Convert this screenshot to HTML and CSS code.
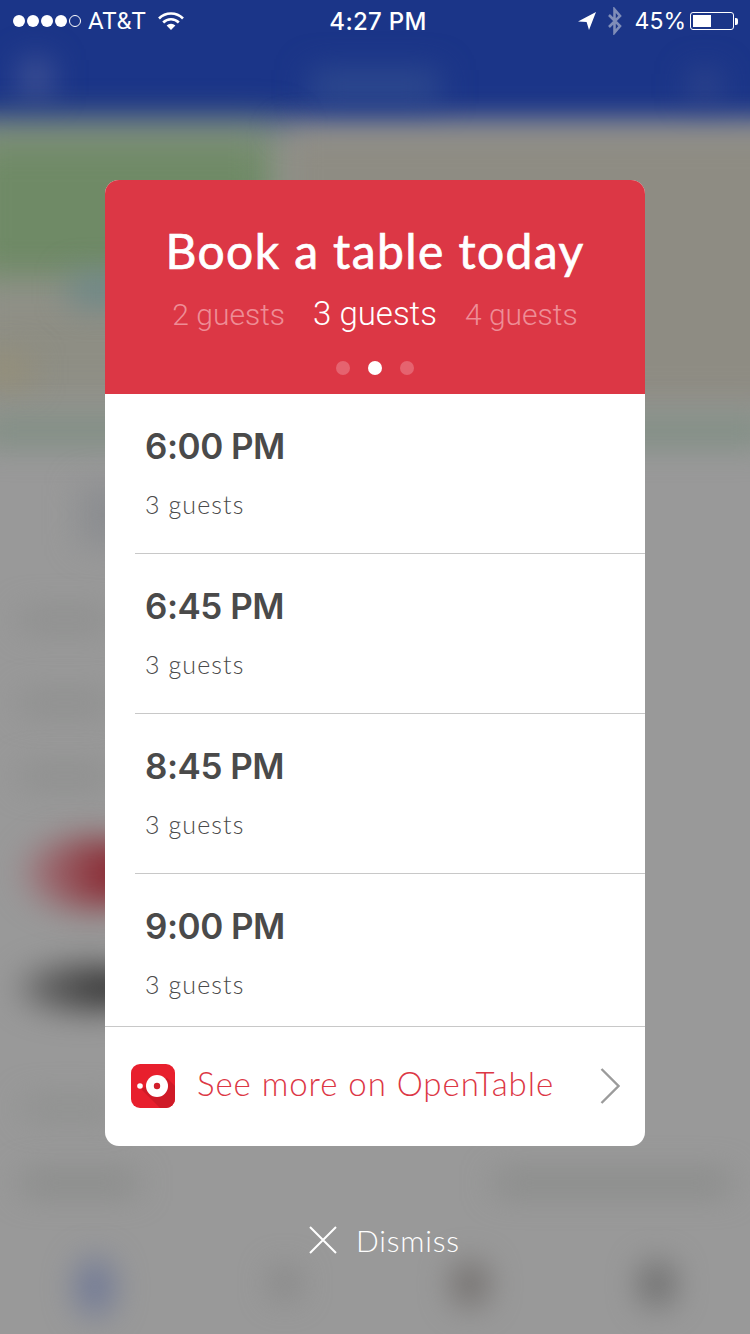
FILE: index.html
```html
<!DOCTYPE html>
<html lang="en">
<head>
    <meta charset="UTF-8">
    <meta name="viewport" content="width=device-width, initial-scale=1.0">
    <title>Book a table today</title>
    <link rel="stylesheet" href="styles.css">
</head>
<body>
    <div class="backdrop">
        <div class="blob blob-nav"></div>
        <div class="blob blob-nav-left"></div>
        <div class="blob blob-nav-mid"></div>
        <div class="blob blob-nav-right"></div>
        <div class="blob blob-map-left"></div>
        <div class="blob blob-map-low"></div>
        <div class="blob blob-map-right"></div>
        <div class="blob blob-map-teal"></div>
        <div class="blob blob-map-yellow"></div>
        <div class="blob blob-strip"></div>
        <div class="blob blob-line1"></div>
        <div class="blob blob-line2"></div>
        <div class="blob blob-line3"></div>
        <div class="blob blob-line4"></div>
        <div class="blob blob-red"></div>
        <div class="blob blob-black"></div>
        <div class="blob blob-line5"></div>
        <div class="blob blob-line6"></div>
        <div class="blob blob-line7"></div>
        <div class="blob blob-tab1"></div>
        <div class="blob blob-tab2"></div>
        <div class="blob blob-tab3"></div>
        <div class="blob blob-tab4"></div>
    </div>

    <div class="status-bar">
        <div class="status-left">
            <span class="signal">
                <i></i><i></i><i></i><i></i><i class="empty"></i>
            </span>
            <span>AT&amp;T</span>
            <svg class="wifi" width="26" height="20" viewBox="0 0 26 20">
                <path d="M1 7.5a17 17 0 0 1 24 0" fill="none" stroke="#fff" stroke-width="2.6"/>
                <path d="M5.2 11.5a11 11 0 0 1 15.6 0" fill="none" stroke="#fff" stroke-width="2.6"/>
                <path d="M8.6 14.6L13 19l4.4-4.4a6.2 6.2 0 0 0-8.8 0z" fill="#fff"/>
            </svg>
        </div>
        <div class="status-time">4:27 PM</div>
        <div class="status-right">
            <svg width="20" height="20" viewBox="0 0 20 20">
                <path d="M19 1L1 10.5l8.6.4L12 19z" fill="#fff"/>
            </svg>
            <svg class="bt" width="16" height="28" viewBox="0 0 16 28">
                <path d="M2 8l11 11-5.5 6.5V2.5L13 9 2 20" fill="none" stroke="#7f8db8" stroke-width="2.6"/>
            </svg>
            <span class="percent">45%</span>
            <div class="battery"><div class="battery-fill"></div></div>
            <div class="battery-tip"></div>
        </div>
    </div>

    <main class="card">
        <header class="card-head">
            <h1>Book a table today</h1>
            <div class="guests">
                <span>2 guests</span>
                <span class="active">3 guests</span>
                <span>4 guests</span>
            </div>
            <div class="dots">
                <i></i><i class="active"></i><i></i>
            </div>
        </header>
        <div class="slot">
            <div class="slot-time">6:00 PM</div>
            <div class="slot-guests">3 guests</div>
        </div>
        <div class="slot">
            <div class="slot-time">6:45 PM</div>
            <div class="slot-guests">3 guests</div>
        </div>
        <div class="slot">
            <div class="slot-time">8:45 PM</div>
            <div class="slot-guests">3 guests</div>
        </div>
        <div class="slot slot-last">
            <div class="slot-time">9:00 PM</div>
            <div class="slot-guests">3 guests</div>
        </div>
        <footer class="more">
            <svg class="ot-logo" width="44" height="44" viewBox="0 0 44 44">
                <rect width="44" height="44" rx="9" fill="#e81f2d"/>
                <path d="M10 25L29 44h6a9 9 0 0 0 9-9V22l-8-8z" fill="#cf1a27"/>
                <circle cx="9" cy="22" r="2.8" fill="#fff"/>
                <circle cx="26" cy="22" r="11" fill="#fff"/>
                <circle cx="26" cy="22" r="3.2" fill="#d11f2c"/>
            </svg>
            <span class="more-text">See more on OpenTable</span>
            <svg class="chevron" width="20" height="36" viewBox="0 0 20 36">
                <path d="M1.5 1l17 17-17 17" fill="none" stroke="#9b9b9b" stroke-width="2.4"/>
            </svg>
        </footer>
    </main>

    <div class="dismiss">
        <svg width="28" height="28" viewBox="0 0 28 28">
            <path d="M1 1l26 26M27 1L1 27" fill="none" stroke="#fff" stroke-width="2"/>
        </svg>
        <span>Dismiss</span>
    </div>
</body>
</html>
```

FILE: styles.css
```css
* {
    box-sizing: border-box;
}
html, body {
    margin: 0;
    height: 1334px;
}
body {
    position: relative;
    width: 750px;
    overflow: hidden;
    background-color: #999;
    font-family: "Open Sans", sans-serif;
    color: #fff;
}

/* blurred page behind the card */
.backdrop {
    position: absolute;
    top: 0;
    left: 0;
    width: 750px;
    height: 1334px;
    overflow: hidden;
    background-color: #999;
}
.blob {
    position: absolute;
    filter: blur(16px);
}
.blob-nav {
    top: -40px;
    left: -40px;
    width: 830px;
    height: 165px;
    background-color: #1b3588;
}
.blob-nav-left {
    top: 60px;
    left: 22px;
    width: 28px;
    height: 36px;
    background-color: #4a5a98;
}
.blob-nav-mid {
    top: 70px;
    left: 310px;
    width: 130px;
    height: 34px;
    background-color: #2f4a8e;
}
.blob-nav-right {
    top: 72px;
    left: 690px;
    width: 30px;
    height: 28px;
    background-color: #34498c;
}
.blob-map-left {
    top: 130px;
    left: -40px;
    width: 320px;
    height: 160px;
    background-color: #6f8a66;
    filter: blur(22px);
}
.blob-map-low {
    top: 290px;
    left: -40px;
    width: 320px;
    height: 115px;
    background-color: #8e8e84;
    filter: blur(22px);
}
.blob-map-right {
    top: 130px;
    left: 285px;
    width: 505px;
    height: 275px;
    background-color: #8e8c83;
}
.blob-map-teal {
    top: 275px;
    left: 70px;
    width: 60px;
    height: 30px;
    background-color: #6a8788;
}
.blob-map-yellow {
    top: 355px;
    left: -20px;
    width: 50px;
    height: 30px;
    background-color: #958f78;
}
.blob-strip {
    top: 418px;
    left: -20px;
    width: 790px;
    height: 26px;
    background-color: #7c8d80;
}
.blob-line1 {
    top: 485px;
    left: 80px;
    width: 50px;
    height: 60px;
    background-color: #8b8d90;
}
.blob-line2 {
    top: 612px;
    left: 20px;
    width: 90px;
    height: 16px;
    background-color: #8a8b8a;
}
.blob-line3 {
    top: 695px;
    left: 20px;
    width: 90px;
    height: 16px;
    background-color: #8a8b8a;
}
.blob-line4 {
    top: 768px;
    left: 20px;
    width: 90px;
    height: 16px;
    background-color: #8a8b8a;
}
.blob-red {
    top: 838px;
    left: 25px;
    width: 130px;
    height: 70px;
    border-radius: 50%;
    background: linear-gradient(to right, #a08085, #8a2a33 65%);
}
.blob-black {
    top: 966px;
    left: 20px;
    width: 130px;
    height: 44px;
    border-radius: 50%;
    background: linear-gradient(to right, #6e6e6e, #333 70%);
}
.blob-line5 {
    top: 1100px;
    left: 25px;
    width: 90px;
    height: 16px;
    background-color: #8b8d8b;
}
.blob-line6 {
    top: 1174px;
    left: 22px;
    width: 115px;
    height: 18px;
    background-color: #858785;
}
.blob-line7 {
    top: 1174px;
    left: 495px;
    width: 235px;
    height: 18px;
    background-color: #858785;
}
.blob-tab1 {
    top: 1258px;
    left: 76px;
    width: 38px;
    height: 58px;
    border-radius: 50%;
    background-color: #6f7896;
}
.blob-tab2 {
    top: 1268px;
    left: 272px;
    width: 26px;
    height: 30px;
    border-radius: 50%;
    background-color: #808080;
}
.blob-tab3 {
    top: 1262px;
    left: 452px;
    width: 36px;
    height: 44px;
    border-radius: 50%;
    background-color: #6f6b69;
}
.blob-tab4 {
    top: 1262px;
    left: 640px;
    width: 34px;
    height: 44px;
    border-radius: 50%;
    background-color: #686868;
}

/* status bar */
.status-bar {
    position: relative;
    display: flex;
    align-items: center;
    justify-content: space-between;
    height: 42px;
    padding: 0 12px 0 13px;
    font-family: Roboto, sans-serif;
    font-size: 24px;
}
.status-left, .status-right {
    display: flex;
    align-items: center;
}
.signal {
    display: flex;
    gap: 2px;
    margin-right: 7px;
}
.signal i {
    width: 12px;
    height: 12px;
    border-radius: 50%;
    background-color: #fff;
}
.signal i.empty {
    background: none;
    border: 1px solid #fff;
}
.wifi {
    margin-left: 12px;
}
.status-time {
    position: absolute;
    left: 3px;
    width: 750px;
    text-align: center;
    font-family: Inter, sans-serif;
    font-weight: 500;
    font-feature-settings: "calt" 0;
    letter-spacing: 0.3px;
}
.bt {
    margin-left: 10px;
}
.percent {
    margin-left: 12px;
    font-family: Inter, sans-serif;
    font-size: 23px;
    font-weight: 400;
}
.battery {
    width: 44px;
    height: 18px;
    margin-left: 4px;
    padding: 2px;
    border: 1px solid #fff;
    border-radius: 3px;
}
.battery-fill {
    width: 18px;
    height: 12px;
    background-color: #fff;
}
.battery-tip {
    width: 3px;
    height: 7px;
    margin-left: 1px;
    background-color: #fff;
    border-radius: 0 2px 2px 0;
}

/* card */
.card {
    position: absolute;
    top: 180px;
    left: 105px;
    width: 540px;
    height: 966px;
    background-color: #fff;
    border-radius: 14px;
    overflow: hidden;
}
.card-head {
    height: 214px;
    padding-top: 41px;
    background-color: #dc3745;
    text-align: center;
}
.card-head h1 {
    margin: 0;
    font-family: Lato, sans-serif;
    font-size: 48px;
    line-height: 60px;
    font-weight: 400;
    letter-spacing: 1.4px;
    -webkit-text-stroke: 0.7px #fff;
}
.guests {
    display: flex;
    justify-content: center;
    align-items: baseline;
    gap: 28px;
    margin-top: 16px;
    font-family: Roboto, sans-serif;
    font-size: 30px;
    line-height: 34px;
    font-weight: 300;
    color: #ee8d96;
}
.guests .active {
    color: #fff;
    font-size: 33px;
}
.dots {
    display: flex;
    justify-content: center;
    gap: 18px;
    margin-top: 29px;
}
.dots i {
    width: 14px;
    height: 14px;
    border-radius: 50%;
    background-color: #e5636f;
}
.dots i.active {
    background-color: #fff;
}
.slot {
    height: 160px;
    margin-left: 30px;
    padding: 30px 0 0 10px;
    border-bottom: 1px solid #c8c8c8;
}
.slot-last {
    height: 153px;
    margin-left: 0;
    padding-left: 40px;
}
.slot-time {
    font-family: Inter, sans-serif;
    font-size: 35px;
    line-height: 44px;
    font-weight: 600;
    font-feature-settings: "calt" 0;
    letter-spacing: -0.5px;
    color: #4a4a4a;
}
.slot-guests {
    margin-top: 20px;
    font-family: Lato, sans-serif;
    font-size: 25px;
    line-height: 32px;
    font-weight: 300;
    letter-spacing: 1.1px;
    color: #4a4a4a;
}
.more {
    display: flex;
    align-items: center;
    height: 119px;
    padding: 0 25px 1px 26px;
}
.more-text {
    flex: 1;
    margin: 0 0 6px 22px;
    font-family: Lato, sans-serif;
    font-size: 33px;
    font-weight: 300;
    letter-spacing: 0.95px;
    color: #dc3745;
}

/* dismiss */
.dismiss {
    position: absolute;
    top: 1222px;
    left: 309px;
    display: flex;
    align-items: center;
    gap: 19px;
    font-family: Lato, sans-serif;
    font-size: 30px;
    font-weight: 300;
    letter-spacing: 0.8px;
}
```
